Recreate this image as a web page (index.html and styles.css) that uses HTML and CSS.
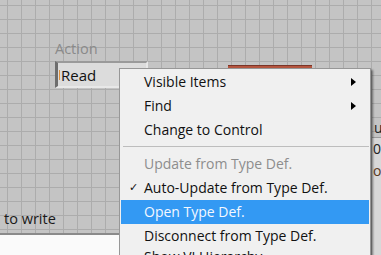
FILE: index.html
```html
<!DOCTYPE html>
<html>
<head>
<meta charset="utf-8">
<link rel="stylesheet" href="styles.css">
</head>
<body>
<div class="panel">
  <div class="ctl-action">
    <div class="ctl-label">Action</div>
    <div class="ring"><span class="cursor"></span>Read</div>
  </div>
  <div class="redbar"></div>
  <div class="right-ctl">
    <div class="rc-top">ur</div>
    <div class="rc-body">
      <div class="rc-line">0.0</div>
      <div class="rc-line rc-or">or</div>
    </div>
  </div>
  <div class="bottom-strip"><span class="bs-text">to write</span></div>
  <div class="white-area"></div>

  <div class="menu">
    <div class="item sub">Visible Items<span class="arrow"></span></div>
    <div class="item sub">Find<span class="arrow"></span></div>
    <div class="item">Change to Control</div>
    <div class="sep"></div>
    <div class="item disabled">Update from Type Def.</div>
    <div class="item checked"><span class="check">✓</span>Auto-Update from Type Def.</div>
    <div class="item active">Open Type Def.</div>
    <div class="item">Disconnect from Type Def.</div>
    <div class="item last">Show VI Hierarchy</div>
  </div>
</div>
</body>
</html>
```
FILE: styles.css
```css
html, body {
  margin: 0;
  padding: 0;
}
body {
  width: 381px;
  height: 255px;
  overflow: hidden;
  font-family: "Open Sans", "Noto Sans", sans-serif;
}
.panel {
  position: relative;
  width: 381px;
  height: 255px;
  background-color: #c4c4c4;
  background-image:
    linear-gradient(to right, #acacac 1px, transparent 1px),
    linear-gradient(to bottom, #acacac 1px, transparent 1px);
  background-size: 14px 14px;
  background-position: 7px 5px;
  overflow: hidden;
}
.ctl-action {
  position: absolute;
  left: 55px;
  top: 40px;
}
.ctl-label {
  font-size: 14.5px;
  color: #8a8a8a;
  line-height: 18px;
}
.ring {
  margin-top: 3px;
  width: 93px;
  height: 27px;
  box-sizing: border-box;
  background: #dcdcdc;
  border-left: 3px solid #6d6d6d;
  border-top: 2px solid #9a9a9a;
  border-right: 2px solid #e8e8e8;
  border-bottom: 2px solid #e8e8e8;
  font-size: 15px;
  line-height: 20px;
  color: #111;
  padding-left: 1px;
  display: flex;
  align-items: center;
}
.cursor {
  width: 1px;
  height: 10px;
  background: #e0903a;
  margin-right: 1px;
}
.redbar {
  position: absolute;
  left: 228px;
  top: 65px;
  width: 84px;
  height: 4px;
  background: linear-gradient(to bottom, #7a3528 0, #7a3528 1px, #b4553f 1px);
}
.right-ctl {
  position: absolute;
  left: 372px;
  top: 119px;
  width: 30px;
  font-size: 14px;
  color: #222;
}
.rc-top {
  line-height: 18px;
  padding-left: 2px;
}
.rc-body {
  background: #d8d8d8;
  border-top: 1px solid #9a9a9a;
  height: 140px;
  padding-left: 1px;
}
.rc-line {
  line-height: 22px;
}
.rc-or {
  color: #5a3a20;
}
.bottom-strip {
  position: absolute;
  left: 0;
  top: 205px;
  width: 130px;
  height: 28px;
  border-bottom: 2px solid #8a8a8a;
}
.bs-text {
  display: block;
  padding-left: 4px;
  font-size: 14.5px;
  line-height: 28px;
  color: #1a1a1a;
}
.white-area {
  position: absolute;
  left: 0;
  top: 235px;
  width: 130px;
  height: 20px;
  background: #fafafa;
}
.menu {
  position: absolute;
  left: 119px;
  top: 68px;
  width: 252px;
  height: 200px;
  box-sizing: border-box;
  background: #f0f0f0;
  border: 1px solid #979797;
  padding: 1px;
  box-shadow: 2px 2px 2px rgba(0, 0, 0, 0.45);
  font-size: 14px;
  color: #111;
}
.item {
  position: relative;
  height: 24px;
  line-height: 24px;
  padding-left: 23px;
  white-space: nowrap;
}
.item.last {
  line-height: 18px;
}
.item.disabled {
  color: #8d8d8d;
}
.item.active {
  background: #3399f3;
  color: #f4f8ff;
}
.check {
  position: absolute;
  left: 8px;
  top: 0;
  font-family: "DejaVu Sans", sans-serif;
  font-size: 11px;
  font-weight: bold;
}
.arrow {
  position: absolute;
  right: 13px;
  top: 8px;
  width: 0;
  height: 0;
  border-top: 4px solid transparent;
  border-bottom: 4px solid transparent;
  border-left: 5px solid #000;
}
.sep {
  height: 1px;
  margin: 4px 0 5px 2px;
  background: #bdbdbd;
}
```
